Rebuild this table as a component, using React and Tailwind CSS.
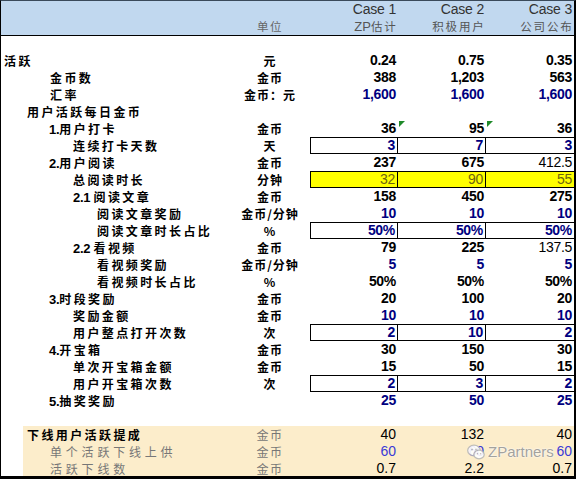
import React from "react";

const CJK = "font-['Noto_Sans_CJK_SC','Noto_Sans',sans-serif]";
const NUM = "font-['Liberation_Sans_Narrow','Liberation_Sans',Arial,sans-serif]";

const rows = [
  { label: "活跃", pl: "pl-[3px]", unit: "元", vals: ["0.24", "0.75", "0.35"] },
  { label: "金币数", pl: "pl-[49px]", unit: "金币", vals: ["388", "1,203", "563"] },
  { label: "汇率", pl: "pl-[49px]", unit: "金币：元", vals: ["1,600", "1,600", "1,600"], blue: true },
  { label: "用户活跃每日金币", pl: "pl-[26px]", unit: "", vals: ["", "", ""] },
  { pre: "1.", label: "用户打卡", pl: "pl-[48px]", unit: "金币", vals: ["36", "95", "36"], tri: true },
  { label: "连续打卡天数", pl: "pl-[72px]", unit: "天", vals: ["3", "7", "3"], blue: true, boxed: true },
  { pre: "2.", label: "用户阅读", pl: "pl-[48px]", unit: "金币", vals: ["237", "675", "412.5"], thin3: true },
  { label: "总阅读时长", pl: "pl-[72px]", unit: "分钟", vals: ["32", "90", "55"], yellow: true },
  { pre: "2.1 ", label: "阅读文章", pl: "pl-[72px]", unit: "金币", vals: ["158", "450", "275"] },
  { label: "阅读文章奖励", pl: "pl-[96px]", unit: "金币/分钟", vals: ["10", "10", "10"], blue: true },
  { label: "阅读文章时长占比", pl: "pl-[96px]", unit: "%", vals: ["50%", "50%", "50%"], blue: true, boxed: true },
  { pre: "2.2 ", label: "看视频", pl: "pl-[72px]", unit: "金币", vals: ["79", "225", "137.5"], thin3: true },
  { label: "看视频奖励", pl: "pl-[96px]", unit: "金币/分钟", vals: ["5", "5", "5"], blue: true },
  { label: "看视频时长占比", pl: "pl-[96px]", unit: "%", vals: ["50%", "50%", "50%"] },
  { pre: "3.", label: "时段奖励", pl: "pl-[48px]", unit: "金币", vals: ["20", "100", "20"] },
  { label: "奖励金额", pl: "pl-[72px]", unit: "金币", vals: ["10", "10", "10"], blue: true },
  { label: "用户整点打开次数", pl: "pl-[72px]", unit: "次", vals: ["2", "10", "2"], blue: true, boxed: true },
  { pre: "4.", label: "开宝箱", pl: "pl-[48px]", unit: "金币", vals: ["30", "150", "30"] },
  { label: "单次开宝箱金额", pl: "pl-[72px]", unit: "金币", vals: ["15", "50", "15"] },
  { label: "用户开宝箱次数", pl: "pl-[72px]", unit: "次", vals: ["2", "3", "2"], blue: true, boxed: true },
  { pre: "5.", label: "抽奖奖励", pl: "pl-[48px]", unit: "", vals: ["25", "50", "25"], blue: true },
];

const cellBorders = [
  "border border-black",
  "border-y border-r border-black",
  "border-y border-black",
];

function Row({ r }) {
  return (
    <div className="flex h-[17px] items-center">
      <div className={`w-[234px] ${r.pl} ${CJK} font-bold text-[12px] tracking-[2.4px] leading-[17px] text-black whitespace-nowrap`}>
        {r.pre && (
          <span className="font-['Liberation_Sans',Arial,sans-serif] text-[13px] tracking-[-0.3px]">{r.pre}</span>
        )}
        {r.label}
      </div>
      <div className={`w-[70px] text-center ${CJK} font-bold text-[12px] tracking-[1px] leading-[17px] text-black whitespace-nowrap`}>
        {r.unit}
      </div>
      <div className="w-[5px]" />
      {r.vals.map((v, i) => {
        const box = r.boxed || r.yellow ? cellBorders[i] : "";
        const bg = r.yellow ? "bg-[#ffff00]" : "";
        let color = r.blue ? "text-[#000080]" : "text-black";
        let weight = "font-bold";
        if (r.yellow) {
          color = "text-[#6e6410]";
          weight = "font-normal";
        }
        if (r.thin3 && i === 2) weight = "font-normal";
        return (
          <div
            key={i}
            className={`relative w-[88px] h-[17px] flex items-center justify-end pr-[2px] ${box} ${bg} ${NUM} ${weight} ${color} text-[14px] leading-[15px] tracking-[-0.3px]`}
          >
            {v}
            {r.tri && i > 0 && (
              <span className="absolute left-[1px] top-[1px] w-0 h-0 border-t-[6px] border-t-[#1f8a2a] border-r-[6px] border-r-transparent" />
            )}
          </div>
        );
      })}
    </div>
  );
}

const beige = [
  { label: "下线用户活跃提成", bold: true, vals: ["40", "132", "40"], color: "text-black" },
  { label: "单个活跃下线上供", vals: ["60", "60", "60"], color: "text-[#3a3ad6]" },
  { label: "活跃下线数", vals: ["0.7", "2.2", "0.7"], color: "text-black" },
];

function WeChat() {
  return (
    <svg width="18" height="16" viewBox="0 0 18 16">
      <ellipse cx="7" cy="6.5" rx="6.3" ry="5.4" fill="#ffffff" stroke="#b8b8b8" strokeWidth="1.3" />
      <circle cx="5" cy="5.5" r="0.9" fill="#b8b8b8" />
      <circle cx="9" cy="5.5" r="0.9" fill="#b8b8b8" />
      <ellipse cx="12" cy="10.5" rx="5.2" ry="4.4" fill="#ffffff" stroke="#b8b8b8" strokeWidth="1.3" />
      <circle cx="10.4" cy="9.8" r="0.8" fill="#b8b8b8" />
      <circle cx="13.6" cy="9.8" r="0.8" fill="#b8b8b8" />
    </svg>
  );
}

export default function App() {
  return (
    <div className="relative w-[576px] h-[479px] bg-white overflow-hidden border-l border-r-2 border-b-[3px] border-t border-t-[#3a4a5a] border-black">
      {/* header */}
      <div className="h-[34px] bg-[#c1d8ef] flex">
        <div className="w-[234px]" />
        <div className="w-[70px] flex flex-col">
          <div className="h-[17px]" />
          <div className={`h-[17px] text-center ${CJK} text-[11.5px] leading-[17px] tracking-[1.5px] text-[#666]`}>单位</div>
        </div>
        <div className="w-[5px]" />
        {[["Case 1", "ZP估计"], ["Case 2", "积极用户"], ["Case 3", "公司公布"]].map(([a, b], i) => (
          <div key={i} className="w-[88px] flex flex-col items-end pr-[2px]">
            <div className="h-[16px] text-[14px] leading-[16px] font-['Liberation_Sans',Arial,sans-serif] text-[#333] tracking-[-0.2px]">{a}</div>
            <div className={`h-[18px] text-[11.5px] leading-[18px] ${CJK} text-[#555] tracking-[1.8px] mr-[-1.5px]`}>
              {b === "ZP估计" ? (
                <>
                  <span className="font-['Liberation_Sans',Arial,sans-serif] tracking-normal text-[13px]">ZP</span>估计
                </>
              ) : (
                b
              )}
            </div>
          </div>
        ))}
      </div>
      <div className="h-px bg-black" />
      <div className="h-[16px]" />
      {rows.map((r, i) => (
        <Row key={i} r={r} />
      ))}
      <div className="h-[17px]" />
      <div className="ml-[22px] bg-[#fcedcb]">
        {beige.map((b, i) => (
          <div key={i} className="flex h-[17px] items-center">
            <div
              className={`w-[212px] ${b.bold ? "pl-[4px]" : "pl-[27px]"} ${CJK} text-[12px] leading-[17px] whitespace-nowrap ${
                b.bold ? "font-bold tracking-[2.4px] text-black" : "font-normal tracking-[3.8px] text-[#777]"
              }`}
            >
              {b.label}
            </div>
            <div className={`w-[70px] text-center ${CJK} text-[12px] tracking-[1.5px] leading-[17px] text-[#777]`}>金币</div>
            <div className="w-[5px]" />
            {b.vals.map((v, j) => (
              <div key={j} className={`w-[88px] text-right pr-[2px] ${NUM} text-[14px] leading-[17px] ${b.color}`}>
                {v}
              </div>
            ))}
          </div>
        ))}
      </div>
      {/* watermark */}
      <div className="absolute left-[466px] top-[442px] flex items-center gap-[3px] opacity-90">
        <WeChat />
        <span className="font-['Liberation_Sans',Arial,sans-serif] text-[15px] leading-[18px] text-[#9a9a9a] [text-shadow:0_0_2px_#fff,0_0_2px_#fff]">
          ZPartners
        </span>
      </div>
    </div>
  );
}
